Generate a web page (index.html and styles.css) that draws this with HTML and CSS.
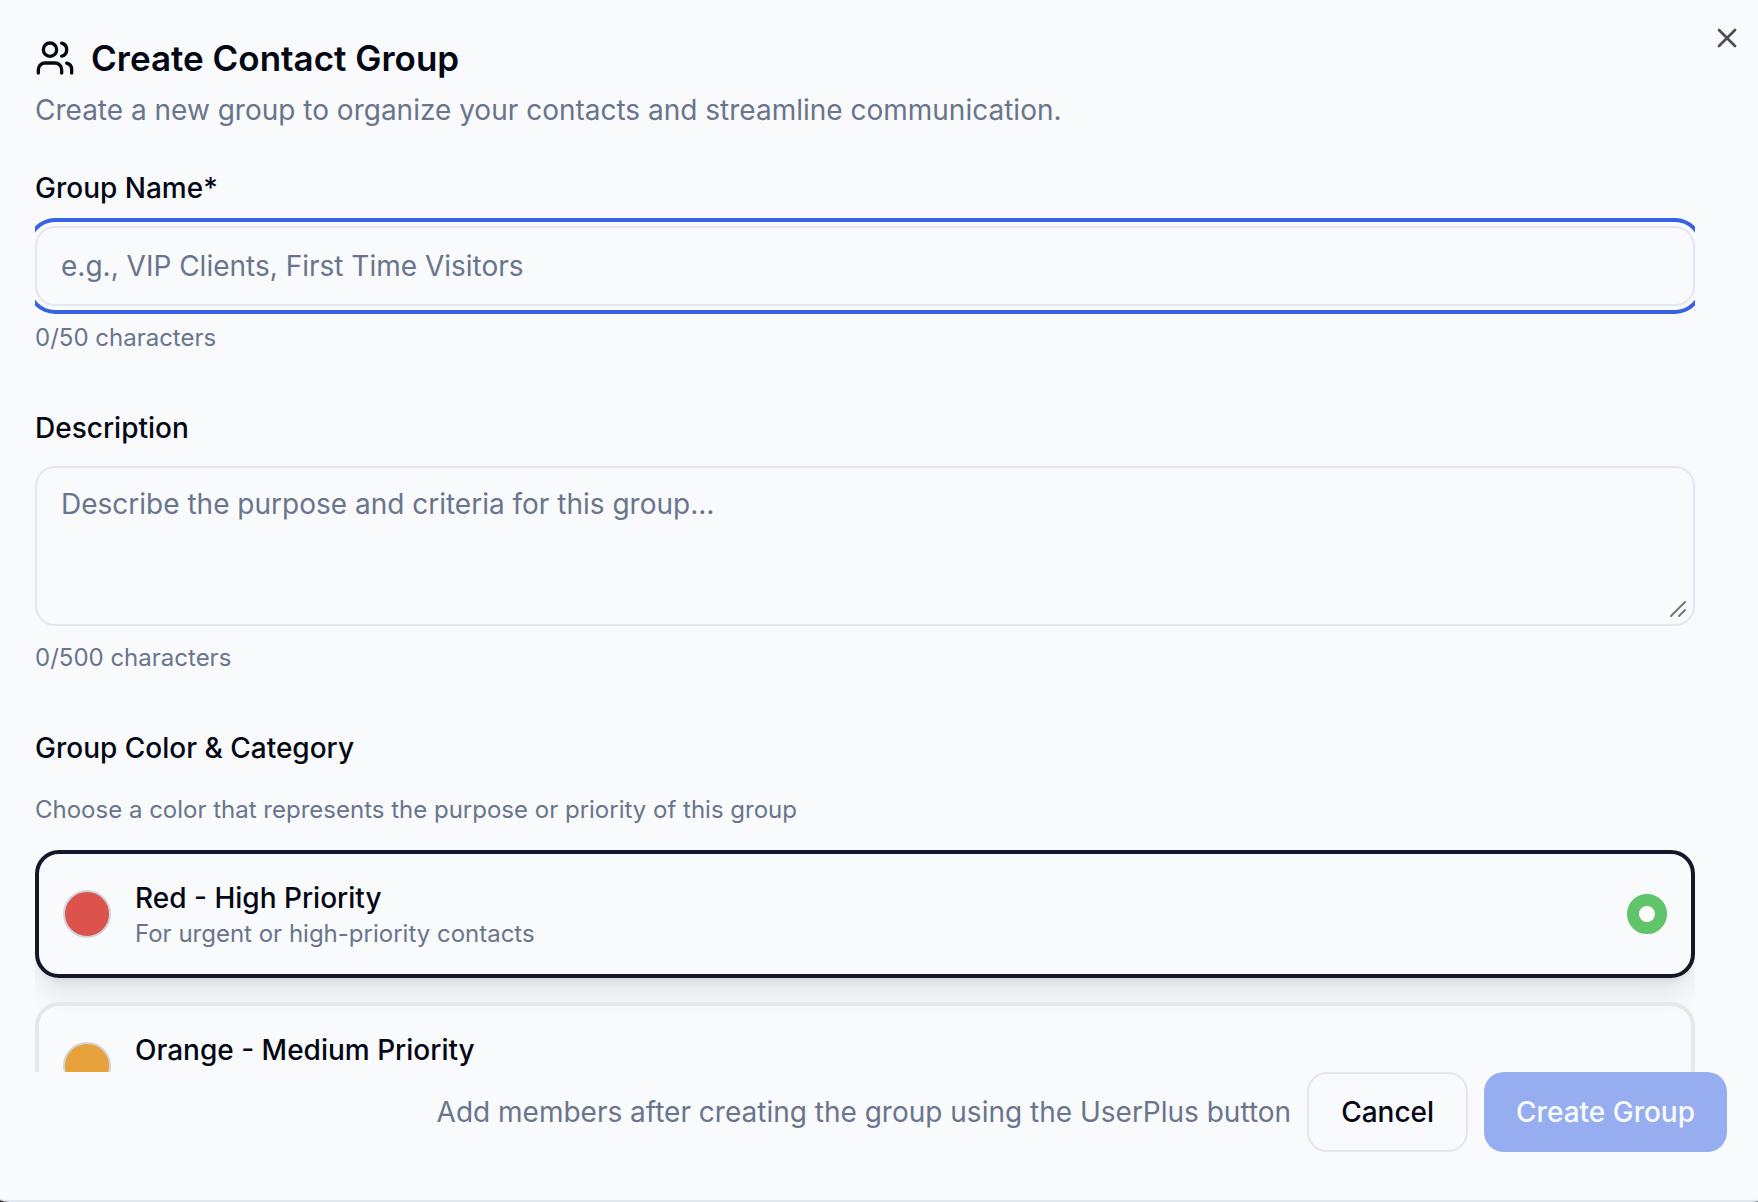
FILE: index.html
```html
<!DOCTYPE html>
<html lang="en">
<head>
<meta charset="utf-8">
<meta name="viewport" content="width=device-width, initial-scale=1">
<title>Create Contact Group</title>
<link rel="stylesheet" href="styles.css">
</head>
<body>
<main class="dialog" role="dialog" aria-labelledby="dialog-title">
  <header class="dialog-header">
    <h1 class="dialog-title" id="dialog-title">
      <svg class="icon-users" viewBox="0 0 24 24" aria-hidden="true">
        <path d="M16 21v-2a4 4 0 0 0-4-4H6a4 4 0 0 0-4 4v2"/>
        <circle cx="9" cy="7" r="4"/>
        <path d="M22 21v-2a4 4 0 0 0-3-3.87"/>
        <path d="M16 3.13a4 4 0 0 1 0 7.75"/>
      </svg>
      Create Contact Group
    </h1>
    <p class="dialog-description">Create a new group to organize your contacts and streamline communication.</p>
  </header>

  <form class="form" id="group-form">
    <div class="field">
      <label class="label" for="name">Group Name*</label>
      <input class="input input-focused" id="name" type="text" maxlength="50" placeholder="e.g., VIP Clients, First Time Visitors">
      <p class="hint">0/50 characters</p>
    </div>

    <div class="field">
      <label class="label" for="description">Description</label>
      <div class="textarea-wrap">
        <textarea class="textarea" id="description" maxlength="500" placeholder="Describe the purpose and criteria for this group..."></textarea>
        <svg class="grip" viewBox="0 0 16 16" aria-hidden="true"><path d="M1 15 15 1M9 15l6-6"/></svg>
      </div>
      <p class="hint">0/500 characters</p>
    </div>

    <fieldset class="colors">
      <legend class="label legend">Group Color &amp; Category</legend>
      <p class="hint">Choose a color that represents the purpose or priority of this group</p>
      <label class="option option-selected">
        <span class="swatch swatch-red"></span>
        <span class="option-text">
          <span class="option-name">Red - High Priority</span>
          <span class="hint">For urgent or high-priority contacts</span>
        </span>
        <input class="option-radio" type="radio" name="color" value="red" checked>
      </label>
      <label class="option">
        <span class="swatch swatch-orange"></span>
        <span class="option-text">
          <span class="option-name">Orange - Medium Priority</span>
        </span>
        <input class="option-radio" type="radio" name="color" value="orange">
      </label>
    </fieldset>
  </form>

  <footer class="dialog-footer">
    <p class="footer-note">Add members after creating the group using the UserPlus button</p>
    <button class="button button-outline" type="button">Cancel</button>
    <button class="button button-primary" type="submit" form="group-form" disabled>Create Group</button>
  </footer>

  <button class="close" type="button" aria-label="Close">
    <svg class="icon-close" viewBox="0 0 24 24" aria-hidden="true"><path d="M18 6 6 18M6 6l12 12"/></svg>
  </button>
</main>
</body>
</html>
```

FILE: styles.css
```css
:root {
  --background: #f9fafc;
  --foreground: #040714;
  --muted: #68758c;
  --border: #e2e8f0;
  --primary: #3662e3;
}

*,
*::before,
*::after {
  box-sizing: border-box;
}

body {
  margin: 0;
  height: 100vh;
  overflow: hidden;
  display: flex;
  background: #2b2b2c;
  color: var(--foreground);
  font-family: Inter, "Liberation Sans", sans-serif;
  font-size: 28px;
  line-height: 40px;
  -webkit-font-smoothing: antialiased;
}

h1,
p {
  margin: 0;
}

input,
textarea,
button {
  font: inherit;
  color: inherit;
}

/* The dialog bleeds past the top and both sides of the window. */
.dialog {
  position: relative;
  flex: 1;
  min-width: 0;
  margin: -12px -19px 0 -15px;
  padding: 48px;
  display: flex;
  flex-direction: column;
  border: 2px solid var(--border);
  border-radius: 24px;
  background: var(--background);
}

.dialog-header {
  display: flex;
  flex-direction: column;
  gap: 12px;
  margin-bottom: 32px;
}

.dialog-title {
  display: flex;
  align-items: center;
  gap: 16px;
  font-size: 35px;
  font-weight: 600;
}

.icon-users,
.icon-close,
.grip {
  display: block;
  fill: none;
  stroke: currentColor;
  stroke-width: 2;
  stroke-linecap: round;
  stroke-linejoin: round;
}

.icon-users {
  width: 40px;
  height: 40px;
}

.dialog-description,
.footer-note {
  color: var(--muted);
}

.form {
  flex: 1;
  min-height: 0;
  margin-right: 32px;
  display: flex;
  flex-direction: column;
  gap: 48px;
  overflow-y: auto;
  scrollbar-width: none;
}

.field {
  display: flex;
  flex-direction: column;
}

.label {
  display: block;
  padding: 12px 0 24px;
  line-height: 28px;
  font-weight: 500;
}

.legend {
  padding-bottom: 32px;
}

.hint {
  font-size: 24px;
  line-height: 32px;
  color: var(--muted);
}

.field .hint {
  margin-top: 16px;
}

.input,
.textarea {
  display: block;
  width: 100%;
  padding: 16px 24px;
  border: 2px solid var(--border);
  border-radius: 20px;
  background: var(--background);
  outline: none;
}

.input {
  height: 80px;
}

.input-focused {
  box-shadow: 0 0 0 4px var(--background), 0 0 0 8px var(--primary);
}

.textarea {
  height: 160px;
  resize: none;
}

.input::placeholder,
.textarea::placeholder {
  color: var(--muted);
  opacity: 1;
}

.textarea-wrap {
  position: relative;
}

.grip {
  position: absolute;
  right: 9px;
  bottom: 9px;
  width: 16px;
  height: 16px;
  color: #77787a;
}

.colors {
  min-width: 0;
  margin: 0;
  padding: 0;
  border: 0;
  display: flex;
  flex-direction: column;
  gap: 24px;
}

.option {
  display: flex;
  align-items: center;
  gap: 24px;
  min-height: 128px;
  padding: 24px;
  border: 4px solid #e5e7eb;
  border-radius: 24px;
}

.option-selected {
  border-color: #131827;
  box-shadow: 0 20px 30px -6px rgb(0 0 0 / 10%), 0 8px 12px -8px rgb(0 0 0 / 10%);
}

.swatch {
  width: 48px;
  height: 48px;
  border: 2px solid #d1d5db;
  border-radius: 50%;
}

.swatch-red {
  background: #dc534d;
}

.swatch-orange {
  background: #e8a23c;
}

.option-text {
  flex: 1;
  min-height: 72px;
  display: flex;
  flex-direction: column;
}

.option-name {
  font-weight: 500;
}

.option-radio {
  appearance: none;
  width: 40px;
  height: 40px;
  margin: 0;
  border-radius: 50%;
}

.option-radio:checked {
  border: 12px solid #5fc46a;
  background: #fff;
}

.dialog-footer {
  display: flex;
  align-items: center;
  justify-content: flex-end;
  gap: 16px;
}

.button {
  height: 80px;
  padding: 0 32px;
  border: 0;
  border-radius: 20px;
  font-weight: 500;
}

.button-outline {
  border: 2px solid var(--border);
  background: var(--background);
}

.button-primary {
  background: var(--primary);
  color: var(--background);
}

.button-primary:disabled {
  opacity: 0.5;
}

.close {
  position: absolute;
  top: 32px;
  right: 32px;
  padding: 0;
  border: 0;
  background: none;
  opacity: 0.7;
}

.icon-close {
  width: 32px;
  height: 32px;
}
```
